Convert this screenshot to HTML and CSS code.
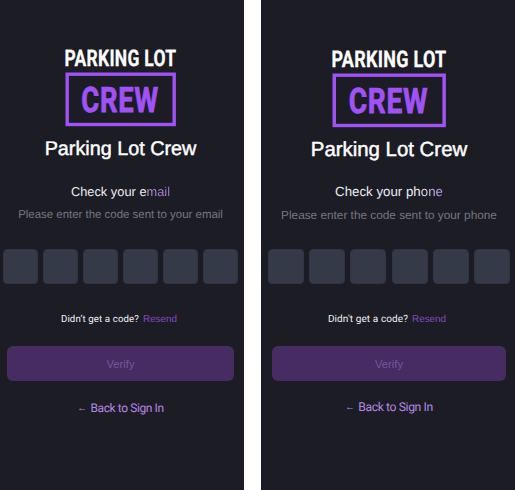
FILE: index.html
```
<!DOCTYPE html>
<html lang="en">
<head>
<meta charset="utf-8">
<title>Parking Lot Crew</title>
<link rel="stylesheet" href="styles.css">
</head>
<body>
<main class="screens">
  <section class="screen email">
    <svg class="logo" viewBox="0 0 111 78" preserveAspectRatio="none">
      <text class="logo-top" transform="translate(-0.6 17.3) scale(0.76 1)" textLength="147" lengthAdjust="spacing">PARKING LOT</text>
      <rect class="logo-frame" x="2.2" y="25.2" width="107" height="50.3"/>
      <text class="logo-crew" transform="translate(16.3 63) scale(0.78 1)" textLength="98.5" lengthAdjust="spacing">CREW</text>
    </svg>
    <h1 class="title">Parking Lot Crew</h1>
    <h2 class="heading">Check your e<span class="accent">mail</span></h2>
    <p class="hint">Please enter the code sent to your email</p>
    <div class="code"><i></i><i></i><i></i><i></i><i></i><i></i></div>
    <p class="resend"><span class="question">Didn’t get a code?</span><a class="resend-link">Resend</a></p>
    <button class="verify">Verify</button>
    <a class="back"><span class="arrow">←</span><span>Back to Sign In</span></a>
  </section>
  <section class="screen phone">
    <svg class="logo" viewBox="0 0 111 78" preserveAspectRatio="none">
      <text class="logo-top" transform="translate(-0.6 17.3) scale(0.76 1)" textLength="147" lengthAdjust="spacing">PARKING LOT</text>
      <rect class="logo-frame" x="2.2" y="25.2" width="107" height="50.3"/>
      <text class="logo-crew" transform="translate(16.3 63) scale(0.78 1)" textLength="98.5" lengthAdjust="spacing">CREW</text>
    </svg>
    <h1 class="title">Parking Lot Crew</h1>
    <h2 class="heading">Check your ph<span class="accent">one</span></h2>
    <p class="hint">Please enter the code sent to your phone</p>
    <div class="code"><i></i><i></i><i></i><i></i><i></i><i></i></div>
    <p class="resend"><span class="question">Didn't get a code?</span><a class="resend-link">Resend</a></p>
    <button class="verify">Verify</button>
    <a class="back"><span class="arrow">←</span><span>Back to Sign In</span></a>
  </section>
</main>
</body>
</html>
```
FILE: styles.css
```
* { box-sizing: border-box; margin: 0; padding: 0; }
body { background: #fff; font-family: "Liberation Sans", sans-serif; overflow: hidden; text-rendering: geometricPrecision; }
.screens { display: flex; justify-content: space-between; width: 515px; height: 490px; }
.screen {
  display: flex;
  flex-direction: column;
  align-items: center;
  background: #1c1c24;
  height: 490px;
  white-space: nowrap;
}
.email { width: 244px; padding: 49px 6px 0 3px; }
.phone { width: 254px; padding: 50px 5px 0 7px; }

.logo { display: block; flex: none; width: 111px; height: 78px; overflow: visible; }
.phone .logo { width: 114px; }
.logo-top { font: 700 23px Roboto, sans-serif; fill: #fff; stroke: #fff; stroke-width: 0.3px; }
.logo-frame { fill: none; stroke: #a052f5; stroke-width: 3.4px; }
.logo-crew { font: 700 35px Roboto, sans-serif; fill: #a052f5; stroke: #a052f5; stroke-width: 0.8px; }

.title { margin-top: 10px; height: 24px; line-height: 24px; font-size: 19.8px; font-weight: 400; color: #fff; -webkit-text-stroke: 0.45px #fff; }
.phone .title { font-size: 20.4px; }
.heading { margin-top: 23px; height: 16px; line-height: 16px; font-size: 12.8px; font-weight: 400; letter-spacing: 0.02px; color: #ececf1; }
.phone .heading { margin-top: 22px; font-size: 13.3px; letter-spacing: 0; }
.accent { background: linear-gradient(90deg, #b99ad8, #a273d4); background-clip: text; -webkit-background-clip: text; color: transparent; }
.phone .accent { background-image: linear-gradient(90deg, #eae6f0, #b48be0); }
.hint { margin-top: 8px; height: 14px; line-height: 14px; font-size: 11.45px; color: #777680; }
.phone .hint { font-size: 11.8px; }

.code { display: grid; grid-template-columns: repeat(6, 1fr); gap: 5.4px; width: 100%; height: 35px; margin-top: 27px; }
.code i { background: #343a48; border: 1px solid #2f3542; border-radius: 4px; }

.resend { display: flex; gap: 4px; height: 14px; line-height: 14px; margin-top: 29px; }
.email .resend { margin-right: 3px; }
.phone .resend { margin-right: 4px; }
.question { font: 400 9.7px/14px Roboto, sans-serif; color: #f2f2f5; letter-spacing: 0.1px; }
.phone .question { font-size: 10px; }
.resend-link { font-size: 9.9px; color: #8549c4; }

.verify { width: 227px; height: 35px; margin-top: 19px; border: 0; border-radius: 6px; background: #462c63; font: 11.2px "Liberation Sans", sans-serif; color: #75569a; }
.phone .verify { width: 234px; }
.back { display: flex; align-items: center; gap: 4px; height: 16px; margin-top: 19px; font: 12px/16px Roboto, sans-serif; letter-spacing: -0.4px; color: #b386e6; }
.phone .back { margin-top: 18px; font-size: 12.2px; }
.arrow { font: 9.5px/16px "Liberation Sans", sans-serif; padding-top: 1px; }
```
